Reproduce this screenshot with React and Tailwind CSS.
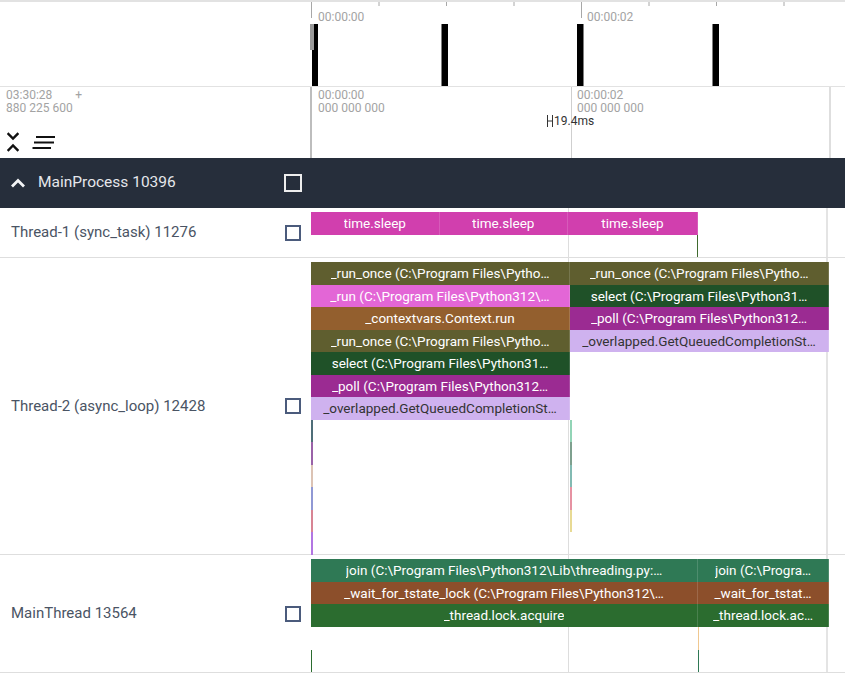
import React from 'react';

function Overview() {
  const ticks = [0, 1, 2, 3, 4, 5, 6, 7];
  return (
    <div className="flex h-[87px] border-t-2 border-b border-[#e2e2e2]">
      <div className="w-[310px] shrink-0" />
      <div className="relative flex-1">
        <svg width="535" height="84" className="absolute left-0 top-0">
          {ticks.map((k) => (
            <line
              key={k}
              x1={1.5 + 67.5 * k}
              x2={1.5 + 67.5 * k}
              y1="0"
              y2={k % 4 === 0 ? 16 : 4}
              stroke="#a8a8a8"
              strokeWidth="1"
            />
          ))}
          <rect x="2" y="22" width="6" height="62" fill="#000" />
          <rect x="-2" y="22" width="6" height="26" fill="#9a9a9a" />
          <rect x="131.5" y="22" width="6.5" height="62" fill="#000" />
          <rect x="267" y="22" width="6.5" height="62" fill="#000" />
          <rect x="402.5" y="22" width="6.5" height="62" fill="#000" />
        </svg>
        <span className="absolute left-[8px] top-[8px] text-[12px] leading-[14px] text-[#a3a3a3]">00:00:00</span>
        <span className="absolute left-[277px] top-[8px] text-[12px] leading-[14px] text-[#a3a3a3]">00:00:02</span>
      </div>
    </div>
  );
}

function Ruler() {
  return (
    <div className="flex h-[71px]">
      <div className="flex w-[310px] shrink-0 flex-col justify-between pb-[6px] pl-[6px] pt-[2px]">
        <div className="text-[12px] leading-[12.5px] text-[#a3a3a3]">
          <div className="flex">
            <span>03:30:28</span>
            <span className="ml-[23px]">+</span>
          </div>
          <div>880 225 600</div>
        </div>
        <div className="flex items-center gap-[13px] pl-[1px]">
          <svg width="12" height="20" viewBox="0 0 12 20" fill="none" stroke="#111" strokeWidth="2.4" strokeLinecap="square">
            <path d="M1.5 2 L6 6.5 L10.5 2" />
            <path d="M1.5 18 L6 13.5 L10.5 18" />
          </svg>
          <svg width="24" height="16" viewBox="0 0 24 16" fill="none" stroke="#111" strokeWidth="2">
            <path d="M4 3 H23" />
            <path d="M2 8.5 H22" />
            <path d="M0.5 14 H19" />
          </svg>
        </div>
      </div>
      <div className="relative flex-1 border-l-2 border-[#bdbdbd]">
        <div className="absolute left-[259px] top-0 h-full w-px bg-[#cfcfcf]" />
        <div className="absolute left-[517px] top-0 h-full w-[2px] bg-[#dedede]" />
        <div className="absolute left-[6px] top-[2px] text-[12px] leading-[12.5px] text-[#a3a3a3]">
          <div>00:00:00</div>
          <div>000 000 000</div>
        </div>
        <div className="absolute left-[265px] top-[2px] text-[12px] leading-[12.5px] text-[#a3a3a3]">
          <div>00:00:02</div>
          <div>000 000 000</div>
        </div>
        <div className="absolute left-[235px] top-[28px] flex items-center gap-[1px] text-[12px] leading-[12px] text-[#333]">
          <svg width="6" height="12" viewBox="0 0 6 12" fill="none" stroke="#333" strokeWidth="1">
            <path d="M0.5 0 V12 M5.5 0 V12 M0.5 6 H5.5" />
          </svg>
          <span>19.4ms</span>
        </div>
      </div>
    </div>
  );
}

function Checkbox() {
  return <div className="h-[16px] w-[16px] border-2 border-[#4b5b7c]" />;
}

function GridLines() {
  return (
    <>
      <div className="absolute left-[258px] top-0 h-full w-px bg-[#dddddd]" />
      <div className="absolute left-[516px] top-0 h-full w-[2px] bg-[#e4e4e4]" />
    </>
  );
}

function Slice({ w, color, text, dark }) {
  return (
    <div
      className={`${w} ${color} flex h-full items-center justify-center overflow-hidden border-r border-white/15 px-[3px] text-[13.5px] ${
        dark ? 'text-[#333]' : 'text-white'
      }`}
    >
      <span className="truncate">{text}</span>
    </div>
  );
}

function Sliver({ color }) {
  return (
    <div className="h-[22.5px]">
      <div className={`h-full w-[1.5px] ${color}`} />
    </div>
  );
}

const olive = 'bg-[#5f5e2f]';
const pink = 'bg-[#e366d6]';
const brown = 'bg-[#935f2e]';
const green = 'bg-[#1f5128]';
const purple = 'bg-[#9b2b92]';
const lavender = 'bg-[#cfb2ef]';

const leftStack = [
  [olive, '_run_once (C:\\Program Files\\Pytho…'],
  [pink, '_run (C:\\Program Files\\Python312\\…'],
  [brown, '_contextvars.Context.run'],
  [olive, '_run_once (C:\\Program Files\\Pytho…'],
  [green, 'select (C:\\Program Files\\Python31…'],
  [purple, '_poll (C:\\Program Files\\Python312…'],
  [lavender, '_overlapped.GetQueuedCompletionSt…'],
];

const rightStack = [
  [olive, '_run_once (C:\\Program Files\\Pytho…'],
  [green, 'select (C:\\Program Files\\Python31…'],
  [purple, '_poll (C:\\Program Files\\Python312…'],
  [lavender, '_overlapped.GetQueuedCompletionSt…'],
];

const leftSlivers = ['bg-[#4f6e78]', 'bg-[#9a62a8]', 'bg-[#dcc3b4]', 'bg-[#9098d4]', 'bg-[#d88494]', 'bg-[#b276e2]'];
const rightSlivers = ['bg-[#92d4b6]', 'bg-[#7ea08e]', 'bg-[#82bab2]', 'bg-[#e692a2]', 'bg-[#e8da94]'];

function Row({ name, h, children }) {
  return (
    <div className={`flex ${h} border-b border-[#dedede]`}>
      <div className="flex w-[310px] shrink-0 items-center justify-between pl-[11px] pr-[9px] text-[15px] text-[#4a5464]">
        <span>{name}</span>
        <Checkbox />
      </div>
      <div className="relative flex-1">
        <GridLines />
        {children}
      </div>
    </div>
  );
}

export default function App() {
  return (
    <div className="relative h-[682px] w-[845px] overflow-hidden bg-white font-[Roboto,sans-serif]">
      <Overview />
      <Ruler />

      <div className="flex h-[50px] items-center bg-[#262e3b]">
        <div className="flex w-[310px] items-center pl-[10px] pr-[8px]">
          <svg width="16" height="10" viewBox="0 0 16 10" fill="none" stroke="#f3f4f6" strokeWidth="2.8">
            <path d="M2 8.5 L8 2.5 L14 8.5" />
          </svg>
          <span className="ml-[12px] text-[15.5px] text-[#e5e7eb]">MainProcess 10396</span>
          <div className="ml-auto h-[18px] w-[18px] border-2 border-[#eeeeee]" />
        </div>
      </div>

      <Row name="Thread-1 (sync_task) 11276" h="h-[50px]">
        <div className="relative flex h-full flex-col pl-[1px] pt-[4px]">
          <div className="flex h-[22.5px]">
            <Slice w="w-[128.5px]" color="bg-[#d13fae]" text="time.sleep" />
            <Slice w="w-[128.5px]" color="bg-[#d13fae]" text="time.sleep" />
            <Slice w="w-[130px]" color="bg-[#d13fae]" text="time.sleep" />
          </div>
          <div className="ml-[386px] w-px flex-1 bg-[#3f6a2e]" />
        </div>
      </Row>

      <Row name="Thread-2 (async_loop) 12428" h="h-[297px]">
        <div className="relative flex pl-[1px] pt-[4px]">
          <div className="flex w-[259px] flex-col">
            {leftStack.map(([c, t], i) => (
              <div key={i} className="flex h-[22.5px]">
                <Slice w="w-full" color={c} text={t} dark={c === lavender} />
              </div>
            ))}
            {leftSlivers.map((c, i) => (
              <Sliver key={i} color={c} />
            ))}
          </div>
          <div className="flex w-[259px] flex-col">
            {rightStack.map(([c, t], i) => (
              <div key={i} className="flex h-[22.5px]">
                <Slice w="w-full" color={c} text={t} dark={c === lavender} />
              </div>
            ))}
            {[0, 1, 2].map((i) => (
              <div key={i} className="h-[22.5px]" />
            ))}
            {rightSlivers.map((c, i) => (
              <Sliver key={i} color={c} />
            ))}
          </div>
        </div>
      </Row>

      <Row name="MainThread 13564" h="h-[118px]">
        <div className="relative flex h-full flex-col pl-[1px] pt-[4px]">
          <div className="flex h-[22.5px]">
            <Slice w="w-[387px]" color="bg-[#2f7955]" text={'join (C:\\Program Files\\Python312\\Lib\\threading.py:…'} />
            <Slice w="w-[131px]" color="bg-[#2f7955]" text={'join (C:\\Progra…'} />
          </div>
          <div className="flex h-[22.5px]">
            <Slice w="w-[387px]" color="bg-[#8c4f2b]" text={'_wait_for_tstate_lock (C:\\Program Files\\Python312\\…'} />
            <Slice w="w-[131px]" color="bg-[#8c4f2b]" text="_wait_for_tstat…" />
          </div>
          <div className="flex h-[22.5px]">
            <Slice w="w-[387px]" color="bg-[#2b6c2f]" text="_thread.lock.acquire" />
            <Slice w="w-[131px]" color="bg-[#2b6c2f]" text="_thread.lock.ac…" />
          </div>
          <div className="flex flex-1">
            <div className="flex w-[387px] flex-col justify-end">
              <div className="h-[22px] w-px bg-[#2b6c2f]" />
            </div>
            <div className="flex flex-col">
              <div className="h-[23px] w-px bg-[#f0c890]" />
              <div className="w-px flex-1 bg-[#2f7955]" />
            </div>
          </div>
        </div>
      </Row>
    </div>
  );
}
